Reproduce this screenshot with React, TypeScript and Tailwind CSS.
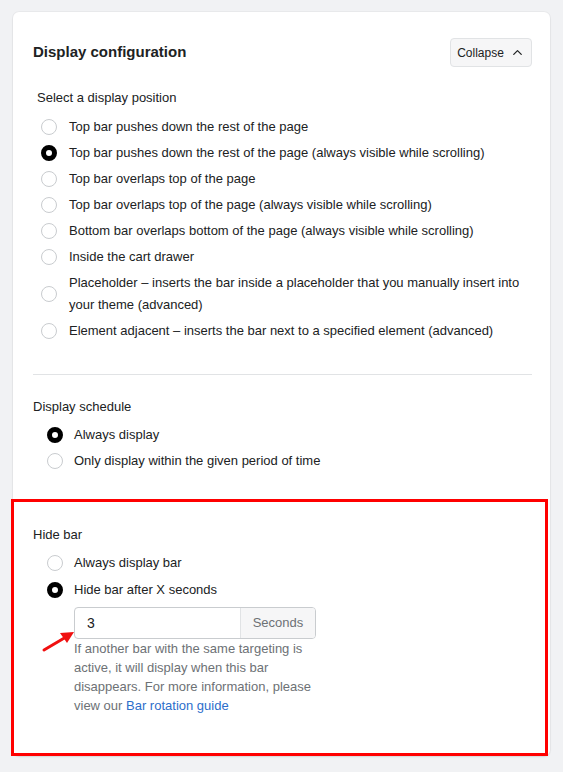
import { ChevronUp } from 'lucide-react';

const positions = [
  { label: 'Top bar pushes down the rest of the page', checked: false },
  { label: 'Top bar pushes down the rest of the page (always visible while scrolling)', checked: true },
  { label: 'Top bar overlaps top of the page', checked: false },
  { label: 'Top bar overlaps top of the page (always visible while scrolling)', checked: false },
  { label: 'Bottom bar overlaps bottom of the page (always visible while scrolling)', checked: false },
  { label: 'Inside the cart drawer', checked: false },
  { label: 'Placeholder – inserts the bar inside a placeholder that you manually insert into your theme (advanced)', checked: false },
  { label: 'Element adjacent – inserts the bar next to a specified element (advanced)', checked: false },
];

function Radio({ checked }: { checked: boolean }) {
  return checked ? (
    <span className="w-4 h-4 shrink-0 rounded-full border-[5px] border-black bg-white" />
  ) : (
    <span className="w-4 h-4 shrink-0 rounded-full border border-[#c9cccf] bg-white" />
  );
}

function Option({ label, checked, gap }: { label: string; checked: boolean; gap: string }) {
  return (
    <label className={`flex items-center py-[2px] leading-[22px] ${gap}`}>
      <Radio checked={checked} />
      <span>{label}</span>
    </label>
  );
}

export default function App() {
  return (
    <div
      className="min-h-screen bg-[#f1f2f4] pt-3 px-[13px] text-[13px] text-[#202223]"
      style={{ fontFamily: '"Liberation Sans", Arial, sans-serif' }}
    >
      <div className="bg-white rounded-md shadow-[0_0_0_1px_rgba(0,0,0,0.03),0_1px_2px_rgba(0,0,0,0.08)]">
        <div className="pl-5 pr-[18px] pt-[26px]">
          <div className="flex items-center justify-between h-[29px]">
            <h2 className="text-[15px] font-bold text-[#202223]">Display configuration</h2>
            <button className="h-[29px] w-[82px] flex items-center justify-center gap-[6px] rounded bg-[#f6f6f7] border border-[#e1e3e5] text-[12px] text-[#202223]">
              Collapse
              <ChevronUp size={15} strokeWidth={2} />
            </button>
          </div>

          <div className="mt-[21px] pl-1 leading-5">Select a display position</div>
          <div className="mt-[6px] pl-[8px] flex flex-col">
            {positions.map(p => (
              <Option key={p.label} label={p.label} checked={p.checked} gap="gap-3" />
            ))}
          </div>

          <div className="mt-[30px] border-t border-[#e1e3e5]" />

          <div className="mt-[22px] leading-5">Display schedule</div>
          <div className="mt-[5px] pl-[14px] flex flex-col">
            <Option label="Always display" checked={true} gap="gap-[11px]" />
            <Option label="Only display within the given period of time" checked={false} gap="gap-[11px]" />
          </div>
        </div>

        <div className="mt-[25px] -ml-[2px] mr-[2px] border-[3px] border-[#ff0000] pl-[19px] pt-[23px] pb-[38px]">
          <div className="leading-5">Hide bar</div>
          <div className="mt-[5px] pl-[14px] flex flex-col gap-[1px]">
            <Option label="Always display bar" checked={false} gap="gap-[11px]" />
            <Option label="Hide bar after X seconds" checked={true} gap="gap-[11px]" />
          </div>
          <div className="relative mt-[4px] ml-[41px] w-[242px]">
            <div className="flex h-8 rounded border border-[#c9cccf] overflow-hidden">
              <div className="flex-1 flex items-center pl-3 text-[14px] text-[#202223]">3</div>
              <div className="w-[75px] flex items-center justify-center border-l border-[#e1e3e5] bg-[#f6f6f7] text-[#6d7175] text-[13px]">
                Seconds
              </div>
            </div>
            <p className="leading-[19px] text-[#6d7175]">
              If another bar with the same targeting is active, it will display when this bar disappears. For more
              information, please view our <span className="text-[#2c6ecb]">Bar rotation guide</span>
            </p>
            <svg className="absolute left-[-34px] top-[21px]" width="36" height="26" viewBox="0 0 36 26">
              <line x1="4" y1="22" x2="26" y2="9" stroke="#f01010" strokeWidth="3" strokeLinecap="round" />
              <polygon points="34,4 20,5 27,15" fill="#f01010" />
            </svg>
          </div>
        </div>
      </div>
    </div>
  );
}
